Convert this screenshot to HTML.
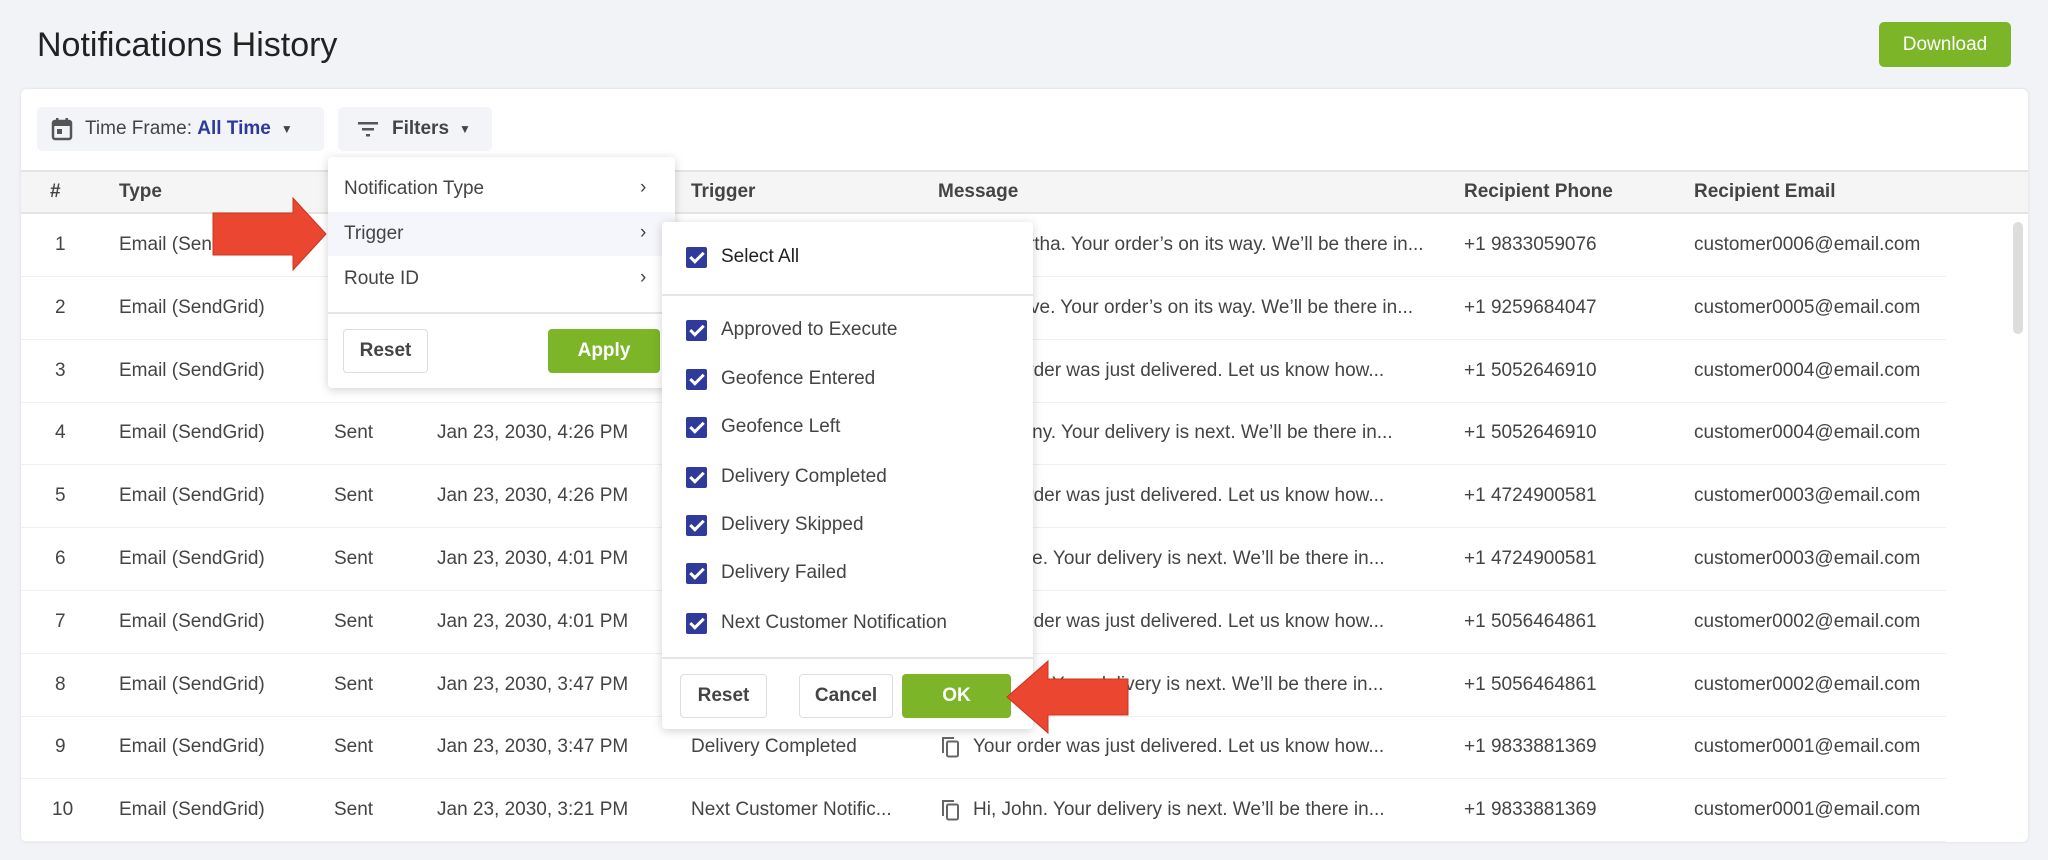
<!DOCTYPE html>
<html><head><meta charset="utf-8"><style>
*{box-sizing:border-box;margin:0;padding:0}
body{width:2048px;height:860px;background:#f2f3f6;font-family:"Liberation Sans",sans-serif;color:#444;position:relative;overflow:hidden}
.abs{position:absolute}
h1{position:absolute;left:37px;top:26px;font-size:34px;font-weight:400;color:#222}
.dl{left:1879px;top:22px;width:132px;height:45px;background:#7cb527;color:#fff;border-radius:5px;font-size:19px;display:flex;align-items:center;justify-content:center}
.card{left:21px;top:89px;width:2007px;height:753px;background:#fff;border-radius:6px;box-shadow:0 0 3px rgba(0,0,0,.1)}
.chip{top:107px;height:44px;background:#f3f4f8;border-radius:5px;font-size:19px;display:flex;align-items:center;color:#444}
.hdr{left:21px;top:170px;width:2007px;height:44px;background:#f5f5f5;border-top:2px solid #e4e4e4;border-bottom:2px solid #e4e4e4}
.t{position:absolute;font-size:19px;white-space:nowrap;line-height:24px}
.th{font-weight:600;color:#444}
.row{position:absolute;left:21px;width:1925px;height:63px;border-bottom:1px solid #f0f0f0}
.menu{background:#fff;border-radius:4px;box-shadow:0 2px 10px rgba(0,0,0,.18)}
.btn{position:absolute;height:44px;border:1px solid #ddd;border-radius:4px;background:#fff;font-size:19px;font-weight:600;display:flex;align-items:center;justify-content:center;color:#444}
.g{background:#7cb527;border-color:#7cb527;color:#fff}
.cb{position:absolute;left:24px;width:21px;height:21px;background:#2f3a9b;border-radius:2px}
.cb:after{content:"";position:absolute;left:7px;top:2px;width:5px;height:11px;border:solid #fff;border-width:0 3px 3px 0;transform:rotate(45deg)}
.ci{position:absolute;left:59px;font-size:19px;color:#444;white-space:nowrap}
</style></head><body>
<h1>Notifications History</h1>
<div class="abs dl">Download</div>
<div class="abs card"></div>
<div class="abs chip" style="left:37px;width:287px"><svg style="margin:0 12px 0 14px" width="22" height="24" viewBox="0 0 22 24"><rect x="2" y="4" width="18" height="18" rx="2" fill="none" stroke="#555" stroke-width="2.5"/><rect x="2" y="4" width="18" height="5" fill="#555"/><rect x="5" y="1" width="2.5" height="5" fill="#555"/><rect x="14.5" y="1" width="2.5" height="5" fill="#555"/><rect x="6" y="12" width="5" height="5" fill="#555"/></svg>Time Frame:&nbsp;<span style="color:#2b3a9c;font-weight:600">All Time</span><span style="margin-left:10px;font-size:12px">▼</span></div>
<div class="abs chip" style="left:338px;width:154px"><svg style="margin:0 14px 0 20px" width="20" height="16" viewBox="0 0 20 16"><rect x="0" y="1" width="20" height="2.5" fill="#555"/><rect x="4" y="7" width="12" height="2.5" fill="#555"/><rect x="8" y="13" width="4" height="2.5" fill="#555"/></svg><span style="font-weight:600">Filters</span><span style="margin-left:10px;font-size:12px">▼</span></div>
<div class="abs hdr"></div>
<div class="t th" style="left:50px;top:180px">#</div>
<div class="t th" style="left:119px;top:180px">Type</div>
<div class="t th" style="left:691px;top:180px">Trigger</div>
<div class="t th" style="left:938px;top:180px">Message</div>
<div class="t th" style="left:1464px;top:180px">Recipient Phone</div>
<div class="t th" style="left:1694px;top:180px">Recipient Email</div>
<div class="abs" style="left:2013px;top:222px;width:10px;height:112px;background:#ddd;border-radius:5px"></div>
<div id="rows"></div>
<script>
var d=[["Jan 23, 2030, 4:41 PM","Approved to Execute","Hi, Martha. Your order’s on its way. We’ll be there in...","+1 9833059076","customer0006@email.com"],
["Jan 23, 2030, 4:41 PM","Approved to Execute","Hi, Steve. Your order’s on its way. We’ll be there in...","+1 9259684047","customer0005@email.com"],
["Jan 23, 2030, 4:26 PM","Delivery Completed","Your order was just delivered. Let us know how...","+1 5052646910","customer0004@email.com"],
["Jan 23, 2030, 4:26 PM","Next Customer Notific...","Hi, Jonny. Your delivery is next. We’ll be there in...","+1 5052646910","customer0004@email.com"],
["Jan 23, 2030, 4:26 PM","Delivery Completed","Your order was just delivered. Let us know how...","+1 4724900581","customer0003@email.com"],
["Jan 23, 2030, 4:01 PM","Next Customer Notific...","Hi, Jane. Your delivery is next. We’ll be there in...","+1 4724900581","customer0003@email.com"],
["Jan 23, 2030, 4:01 PM","Delivery Completed","Your order was just delivered. Let us know how...","+1 5056464861","customer0002@email.com"],
["Jan 23, 2030, 3:47 PM","Next Customer Notific...","Hi, Mike. Your delivery is next. We’ll be there in...","+1 5056464861","customer0002@email.com"],
["Jan 23, 2030, 3:47 PM","Delivery Completed","Your order was just delivered. Let us know how...","+1 9833881369","customer0001@email.com"],
["Jan 23, 2030, 3:21 PM","Next Customer Notific...","Hi, John. Your delivery is next. We’ll be there in...","+1 9833881369","customer0001@email.com"]];
var h="";
d.forEach(function(r,i){var y=214+i*62.8;var ty=y+19;
h+='<div class="row" style="top:'+y+'px"></div>';
h+='<div class="t" style="left:'+(i==9?52:55)+'px;top:'+ty+'px">'+(i+1)+'</div>';
h+='<div class="t" style="left:119px;top:'+ty+'px">Email (SendGrid)</div>';
h+='<div class="t" style="left:334px;top:'+ty+'px">Sent</div>';
h+='<div class="t" style="left:437px;top:'+ty+'px">'+r[0]+'</div>';
h+='<div class="t" style="left:691px;top:'+ty+'px">'+r[1]+'</div>';
h+='<svg class="abs" style="left:941px;top:'+(ty+1)+'px" width="20" height="22" viewBox="0 0 20 22"><path d="M2 17V2h11" fill="none" stroke="#666" stroke-width="2"/><rect x="6" y="5.5" width="11" height="15" rx="1.5" fill="none" stroke="#666" stroke-width="2"/></svg>';
h+='<div class="t" style="left:973px;top:'+ty+'px;width:452px;overflow:hidden;text-overflow:ellipsis">'+r[2]+'</div>';
h+='<div class="t" style="left:1464px;top:'+ty+'px">'+r[3]+'</div>';
h+='<div class="t" style="left:1694px;top:'+ty+'px">'+r[4]+'</div>';});
document.getElementById("rows").innerHTML=h;
</script>
<div class="abs menu" style="left:328px;top:157px;width:347px;height:231px">
<div class="abs" style="left:0;top:55px;width:347px;height:44px;background:#f4f6fb"></div>
<div class="t" style="left:16px;top:20px">Notification Type</div><div class="t" style="left:312px;top:19px">›</div>
<div class="t" style="left:16px;top:65px">Trigger</div><div class="t" style="left:312px;top:64px">›</div>
<div class="t" style="left:16px;top:110px">Route ID</div><div class="t" style="left:312px;top:109px">›</div>
<div class="abs" style="left:0;top:155px;width:347px;height:2px;background:#e6e6e6"></div>
<div class="btn" style="left:15px;top:172px;width:85px">Reset</div>
<div class="btn g" style="left:220px;top:172px;width:112px">Apply</div>
</div>
<div class="abs menu" style="left:662px;top:222px;width:371px;height:507px">
<div class="cb" style="top:25px"></div><div class="ci" style="top:24px;color:#222">Select All</div>
<div class="abs" style="left:0;top:72px;width:371px;height:2px;background:#e6e6e6"></div>
<div class="cb" style="top:98px"></div><div class="ci" style="top:97px">Approved to Execute</div>
<div class="cb" style="top:147px"></div><div class="ci" style="top:146px">Geofence Entered</div>
<div class="cb" style="top:195px"></div><div class="ci" style="top:194px">Geofence Left</div>
<div class="cb" style="top:245px"></div><div class="ci" style="top:244px">Delivery Completed</div>
<div class="cb" style="top:293px"></div><div class="ci" style="top:292px">Delivery Skipped</div>
<div class="cb" style="top:341px"></div><div class="ci" style="top:340px">Delivery Failed</div>
<div class="cb" style="top:391px"></div><div class="ci" style="top:390px">Next Customer Notification</div>
<div class="abs" style="left:0;top:435px;width:371px;height:2px;background:#e6e6e6"></div>
<div class="btn" style="left:18px;top:452px;width:87px">Reset</div>
<div class="btn" style="left:137px;top:452px;width:94px">Cancel</div>
<div class="btn g" style="left:240px;top:452px;width:109px">OK</div>
</div>
<svg class="abs" style="left:210px;top:195px" width="120" height="80" viewBox="0 0 120 80"><path d="M3 18H83V3L116 39L83 75V60H3Z" fill="#ea4630" stroke="#c93520" stroke-width="1"/></svg>
<svg class="abs" style="left:1003px;top:657px" width="128" height="80" viewBox="0 0 128 80"><path d="M125 22H45V4L4 40L45 76V58H125Z" fill="#ea4630" stroke="#c93520" stroke-width="1"/></svg>
</body></html>
